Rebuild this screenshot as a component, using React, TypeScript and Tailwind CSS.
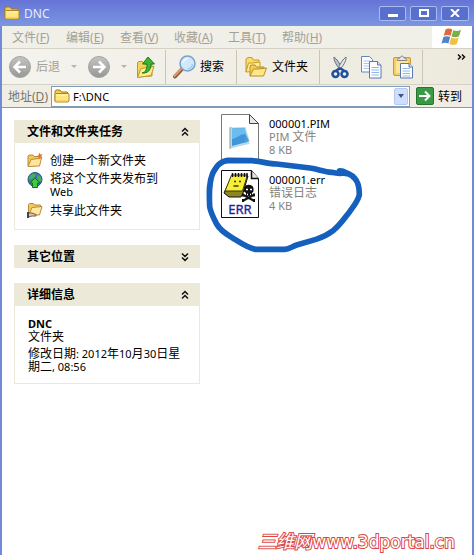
import { useState } from "react";
import type { ReactNode } from "react";

const menus = [
  { name: "文件", letter: "F" },
  { name: "编辑", letter: "E" },
  { name: "查看", letter: "V" },
  { name: "收藏", letter: "A" },
  { name: "工具", letter: "T" },
  { name: "帮助", letter: "H" },
];

const FolderIcon = ({ className }: { className: string }) => (
  <svg viewBox="0 0 16 14" className={className} aria-hidden="true">
    <path d="M1 12V2.500L2 1h4l1.500 2H13l1 1v3" fill="#f3cd55" stroke="#a87b18" />
    <path d="M1 12.500V5.500l1-1h12.500l.5.700V12l-1 1H2z" fill="#ffe680" stroke="#b3871e" />
    <path d="M2.500 6h11.500" stroke="#fff7bd" />
    <path d="M2.500 12h11" stroke="#eec44c" />
  </svg>
);

// Two stacked folders, used on the toolbar
const FoldersIcon = () => (
  <svg viewBox="0 0 24 22" className="h-[22px] w-6 shrink-0" aria-hidden="true">
    <path d="M2 16V3l1.500-1.500H8L9.500 4H15v4" fill="#f9dc6d" stroke="#c59a2c" />
    <path d="M2 16 4.500 7H8l8-1v9z" fill="#ffec98" stroke="#c59a2c" />
    <path d="M6 20V10l1-1h4l1.500 2H20v4" fill="#f3ce55" stroke="#b98c23" />
    <path d="m6 20 3.500-7H14l8.500-1-3 8z" fill="#ffe887" stroke="#b98c23" strokeLinejoin="round" />
  </svg>
);

const CircleArrow = ({ back }: { back?: boolean }) => (
  <svg viewBox="0 0 24 24" className="h-6 w-6 shrink-0" aria-hidden="true">
    <defs>
      <linearGradient id={back ? "greyBack" : "greyNext"} x1="0" y1="0" x2="0" y2="1">
        <stop offset="0" stopColor="#c4c4c2" />
        <stop offset="1" stopColor="#969694" />
      </linearGradient>
    </defs>
    <circle cx="12" cy="12" r="10.500" fill={back ? "url(#greyBack)" : "url(#greyNext)"} stroke="#a3a3a0" />
    <path
      d={back ? "M18 12H7.500M12 6.500 6.500 12l5.500 5.500" : "M6 12h10.500M12 6.500l5.500 5.500-5.500 5.500"}
      fill="none"
      stroke="#fff"
      strokeWidth="2.500"
    />
  </svg>
);

const UpFolderIcon = () => (
  <svg viewBox="0 0 20 24" className="h-6 w-5 shrink-0" aria-hidden="true">
    <path d="M1.500 22V8l1-1.500h4L8 9h8v12z" fill="#f4d35e" stroke="#c19628" />
    <path d="m1.500 22.500 3.500-9 13-2-3 9z" fill="#ffec95" stroke="#c19628" />
    <path d="M6 18c4-1 5-4 5-9H6.500L12 2l6.500 7H15c0 6-3 9.500-9 9z" fill="#3db534" stroke="#1d7d1b" strokeLinejoin="round" />
  </svg>
);

const SearchIcon = () => (
  <svg viewBox="0 0 24 24" className="h-6 w-6 shrink-0" aria-hidden="true">
    <path d="m10 14-7 7.500" stroke="#8a5a3a" strokeWidth="4" strokeLinecap="round" />
    <path d="m9.500 13.500-7 7.500" stroke="#dba078" strokeWidth="2" strokeLinecap="round" />
    <circle cx="15.500" cy="8.500" r="7.500" fill="#cfe9fb" stroke="#7d9ecb" strokeWidth="1.500" />
    <path d="M10.500 9a5 5 0 0 1 6-5.500c-3 1-5 3-6 5.500z" fill="#fff" />
    <path d="M20.500 9a5 5 0 0 1-5 5" fill="none" stroke="#9ccff3" strokeWidth="1.500" />
  </svg>
);

const ScissorsIcon = () => (
  <svg viewBox="0 0 20 24" className="h-6 w-5 shrink-0" aria-hidden="true">
    <path d="M4 2c-.5 4 3 9 6.500 13l1.500-1.500C10 9 7 4 4 2z" fill="#b9c3cd" stroke="#66717e" />
    <path d="M16 2c.5 4-3 9-6.500 13L8 13.500C10 9 13 4 16 2z" fill="#e5e9ed" stroke="#66717e" />
    <ellipse cx="5.500" cy="19" rx="3" ry="3" fill="#eef1f4" stroke="#20509d" strokeWidth="2.500" />
    <ellipse cx="14.500" cy="19" rx="3" ry="3" fill="#eef1f4" stroke="#20509d" strokeWidth="2.500" />
    <path d="m6 15.500 4-2 4 2" fill="none" stroke="#20509d" strokeWidth="2.500" />
  </svg>
);

const CopyIcon = () => (
  <svg viewBox="0 0 22 24" className="h-6 w-[22px] shrink-0" aria-hidden="true">
    <path d="M1.500 1.500h8l3 3V17h-11z" fill="#fbfdff" stroke="#6586bb" />
    <path d="M3.500 6h7M3.500 8.500h7M3.500 11h7M3.500 13.500h7" stroke="#a9c9f0" />
    <path d="M9.500 6.500h8l3.500 3.500v13H9.500z" fill="#fff" stroke="#5877b3" />
    <path d="M17.500 6.500V10H21" fill="#d4e4f8" stroke="#5877b3" />
    <path d="M11.500 12.500h7.500M11.500 15h7.500M11.500 17.500h7.500M11.500 20h7.500" stroke="#8fb7ea" />
  </svg>
);

const PasteIcon = () => (
  <svg viewBox="0 0 22 24" className="h-6 w-[22px] shrink-0" aria-hidden="true">
    <rect x="1.500" y="2.500" width="17" height="18" rx="1.500" fill="#f5cd62" stroke="#c79b3a" />
    <path d="M4 6h12v12H4z" fill="#ffe596" />
    <path d="M5.500 5.500c0-2 1-2.500 2.500-2.500.5-2.500 3.500-2.500 4 0 1.500 0 2.500.5 2.500 2.500z" fill="#e6e6ea" stroke="#80808e" />
    <path d="M8.500 8.500H17l3.500 3.500v11h-12z" fill="#fff" stroke="#5877b3" />
    <path d="M17 8.500V12h3.500" fill="#d4e4f8" stroke="#5877b3" />
    <path d="M10.500 13.500H18M10.500 16H18M10.500 18.500H18M10.500 21H18" stroke="#8fb7ea" />
  </svg>
);

const WindowsFlag = () => (
  <svg viewBox="0 0 22 20" className="h-5 w-[22px]" aria-hidden="true">
    <path d="M4.500 2.500C7 1 9 1.300 11.300 2.600L9.500 9C7.300 7.800 5 7.700 2.700 9z" fill="#e2683c" />
    <path d="M12.300 3.200c2.700 1.200 5 1 7.700-.4l-2 6.500c-2.400 1.200-4.800 1.200-7.500.1z" fill="#79b048" />
    <path d="M2.400 10.100c2.500-1.300 4.700-1.200 6.800 0l-1.800 6.500c-2-1.200-4.400-1.300-6.900.1z" fill="#4c84cc" />
    <path d="M10.200 10.600c2.700 1.100 5 1 7.500-.1l-1.900 6.600c-2.500 1.300-4.900 1.200-7.500 0z" fill="#f0c040" />
  </svg>
);

const NewFolderIcon = () => (
  <svg viewBox="0 0 16 16" className="h-4 w-4" aria-hidden="true">
    <path d="M1 14V4l1-1h4l1 1.500h6V8" fill="#efc75b" stroke="#bd8d34" />
    <path d="m1 14.500 3-7L14.500 6l-2 8z" fill="#ffe5a0" stroke="#bd8d34" />
    <path d="m12.500.5.8 2 2.200-.3-1.200 1.800 1.200 2-2.300-.5-1.200 1.800-.5-2.200-2-.9 2-1z" fill="#e8732c" />
  </svg>
);

const GlobeIcon = () => (
  <svg viewBox="0 0 16 16" className="h-4 w-4" aria-hidden="true">
    <circle cx="8" cy="7.500" r="7" fill="#3878ae" stroke="#245779" />
    <path d="M3 3.500C5 1 8 1.500 9 3L7 6 4 7.500 1.500 7zM11 3l3 2 .5 4-3 1-1.500-4z" fill="#48ab63" />
    <path d="M8 6 13 11h-2.500v4.500h-5V11H3z" fill="#3ecb40" stroke="#156f22" />
  </svg>
);

const ShareIcon = () => (
  <svg viewBox="0 0 16 16" className="h-4 w-4" aria-hidden="true">
    <path d="M1.500 12V2.500l1-1h4l1 1.500h6V7" fill="#f2cb60" stroke="#b78c34" />
    <path d="m2 12.500 3-7 10-1-2.500 8.500z" fill="#ffe9a2" stroke="#b78c34" />
    <path d="M1 11h4l4 1.500v1.500H5l-4 1z" fill="#e8c49d" stroke="#76573a" />
    <path d="M0 10h2v6H0z" fill="#3c4450" />
  </svg>
);

const GoIcon = () => (
  <svg viewBox="0 0 18 18" className="h-[18px] w-[18px]" aria-hidden="true">
    <rect x=".5" y=".5" width="17" height="17" rx="1.500" fill="#3a9a44" stroke="#22762d" />
    <path d="M3 9h10M9 4.500 13.500 9 9 13.500" fill="none" stroke="#fff" strokeWidth="2" />
  </svg>
);

const Chevrons = ({ down }: { down?: boolean }) => (
  <svg viewBox="0 0 8 10" className={down ? "h-[10px] w-2 rotate-180" : "h-[10px] w-2"} aria-hidden="true">
    <path d="m1 4.500 3-3 3 3M1 8.500l3-3 3 3" fill="none" stroke="#111" strokeWidth="1.500" />
  </svg>
);

const PimIcon = () => (
  <svg viewBox="0 0 40 48" className="h-12 w-10 shrink-0" aria-hidden="true">
    <path d="M1.500.5h28l9 9v38h-37z" fill="#fff" stroke="#777" />
    <path d="M29.500.5v9h9z" fill="#e8e8e8" stroke="#444" />
    <path d="m9.500 13.500 2-.5v21l-2 1z" fill="#8b9aa0" />
    <path d="m10.500 13.500 15-.5 4 13.500v3.500l-5 1-14 3.500z" fill="#b5dbe8" />
    <path d="m12 14.500 13-.5v14.500l-13 3.500z" fill="#3f97da" />
    <path d="m12 14.500 13-.5.5 6c-6 0-8 4-13.500 5z" fill="#6bbdf0" />
    <path d="m25 18 4 9-4 2z" fill="#4d9fd8" />
  </svg>
);

const ErrIcon = () => (
  <svg viewBox="0 0 40 48" className="h-12 w-10 shrink-0" aria-hidden="true">
    <path d="M1.500.5h30l7 8v39h-37z" fill="#fff" stroke="#111" />
    <path d="M31.500.5v8h7" fill="#e4e4e4" stroke="#111" strokeWidth="1.500" />
    <path d="M12 6h16l-5 17-2 4H9l-5-4z" fill="#8b8620" stroke="#111" />
    <path d="M11.500 5h16l-5 16H5z" fill="#f8ee38" stroke="#39370d" />
    <path d="M12.500 7V3M15.500 7V3M18.500 7V3M21.500 7V3M24.500 7V3M27 7V3" stroke="#111" strokeWidth="1.500" />
    <path d="M14 11.500h2M19 11.500h2M13.500 16h5" stroke="#39370d" strokeWidth="1.500" />
    <path d="m23.500 25 10 5.500M33.500 25l-10 5.500" stroke="#fff" strokeWidth="4" />
    <path d="m23.500 25 10 5.500M33.500 25l-10 5.500" stroke="#111" strokeWidth="2" />
    <path d="M23 23.500v3M34 23.500v3M23 29v3M34 29v3" stroke="#111" strokeWidth="2" />
    <path d="M24 18.500c0-5 9.500-5 9.500 0v3L32 23v3h-6v-3l-2-1.500z" fill="#111" />
    <path d="M26 19.500h2M30 19.500h2M27 24.500h1M30 24.500h1" stroke="#fff" strokeWidth="1.500" />
    <text x="20" y="44" textAnchor="middle" fill="#23239a" stroke="#23239a" strokeWidth=".3" className="font-['Noto_Sans',sans-serif] text-[13px]">
      ERR
    </text>
  </svg>
);

const Separator = () => <div className="h-[34px] w-px shrink-0 bg-[#c9c6b8]" />;

const DropArrow = () => (
  <span className="h-0 w-0 shrink-0 border-x-[3px] border-t-[3px] border-x-transparent border-t-[#b5b4aa]" />
);

type PanelProps = {
  title: string;
  startOpen?: boolean;
  children?: ReactNode;
};

const Panel = ({ title, startOpen = false, children }: PanelProps) => {
  const [open, setOpen] = useState(startOpen);

  return (
    <section>
      <button
        onClick={() => setOpen(!open)}
        aria-expanded={open}
        className="flex h-[23px] w-full items-center justify-between bg-[#ece9d8] pl-[13px] pr-[11px] font-bold"
      >
        {title}
        <Chevrons down={!open} />
      </button>
      {open && children && (
        <div className="border border-t-0 border-[#ece9d8] bg-white px-3">{children}</div>
      )}
    </section>
  );
};

export default function App() {
  const [address, setAddress] = useState("F:\\DNC");

  return (
    <div className="relative flex min-h-screen flex-col overflow-hidden bg-[#718ad8] px-[2px] font-['Noto_Sans','Noto_Sans_CJK_SC',sans-serif] text-[12px] leading-[13px] text-black">
      {/* Title bar */}
      <header className="-mx-[2px] flex h-[26px] items-center bg-linear-to-b from-[#6574d6] to-[#7c96e1] pl-1 pr-[5px]">
        <FolderIcon className="h-[14px] w-4" />
        <h1 className="ml-1 flex-1 text-[#e6ebff]">DNC</h1>
        <div className="flex gap-1">
          <button aria-label="Minimize" className="flex h-[15px] w-[27px] items-center justify-center rounded-[2px] border border-[#a9baf3] bg-[#5870cd]">
            <span className="mt-1 h-[3px] w-[10px] bg-white" />
          </button>
          <button aria-label="Maximize" className="flex h-[15px] w-[27px] items-center justify-center rounded-[2px] border border-[#a9baf3] bg-[#5870cd]">
            <span className="h-2 w-[10px] border-2 border-white" />
          </button>
          <button aria-label="Close" className="flex h-[15px] w-[28px] items-center justify-center rounded-[2px] border border-[#a9baf3] bg-[#5870cd]">
            <svg viewBox="0 0 10 8" className="h-2 w-[10px]" aria-hidden="true">
              <path d="m1 0 8 8M9 0 1 8" stroke="#fff" strokeWidth="2" />
            </svg>
          </button>
        </div>
      </header>

      {/* Menu bar */}
      <nav className="flex h-[23px] border-b border-[#d5d2c5] bg-[#f0efe8] text-[#a3a195]">
        <div className="flex flex-1 items-center gap-4 pl-[10px]">
          {menus.map((menu) => (
            <button key={menu.letter} className="w-[38px] shrink-0 whitespace-nowrap text-left">
              {menu.name}(<u>{menu.letter}</u>)
            </button>
          ))}
        </div>
        <div className="flex w-10 items-center justify-center bg-white">
          <WindowsFlag />
        </div>
      </nav>

      {/* Toolbar */}
      <div className="flex h-9 items-center border-b border-[#d5d2c5] bg-linear-to-r from-[#f4f3ee] to-[#edeadd]">
        <div className="flex w-[163px] shrink-0 items-center pl-[6px]">
          <button className="flex items-center gap-1 text-[#a3a195]">
            <CircleArrow back />
            后退
          </button>
          <button aria-label="后退列表" className="flex w-[27px] justify-center">
            <DropArrow />
          </button>
          <button aria-label="前进" className="flex">
            <CircleArrow />
          </button>
          <button aria-label="前进列表" className="flex w-[25px] justify-center">
            <DropArrow />
          </button>
          <button aria-label="向上" className="flex">
            <UpFolderIcon />
          </button>
        </div>
        <Separator />
        <button className="flex w-[70px] shrink-0 items-center gap-1 pl-[6px]">
          <SearchIcon />
          搜索
        </button>
        <Separator />
        <button className="flex w-[82px] shrink-0 items-center gap-1 whitespace-nowrap pl-[7px]">
          <FoldersIcon />
          文件夹
        </button>
        <Separator />
        <div className="flex w-[102px] shrink-0 items-center gap-[10px] pl-[10px]">
          <button aria-label="剪切" className="flex">
            <ScissorsIcon />
          </button>
          <button aria-label="复制" className="flex">
            <CopyIcon />
          </button>
          <button aria-label="粘贴" className="flex">
            <PasteIcon />
          </button>
        </div>
        <Separator />
        <button aria-label="更多" className="ml-auto mr-[5px] flex self-start pt-[5px]">
          <svg viewBox="0 0 10 6" className="h-[6px] w-[10px]" aria-hidden="true">
            <path d="m1 .5 2.500 2.500L1 5.500M5 .5 7.500 3 5 5.500" fill="none" stroke="#111" strokeWidth="1.500" />
          </svg>
        </button>
      </div>

      {/* Address bar */}
      <div className="flex h-[23px] items-center border-b border-[#7f9db9] bg-[#f0eee4]">
        <label htmlFor="address" className="w-[49px] shrink-0 pl-[6px] text-[#77756a]">
          地址(<u>D</u>)
        </label>
        <div className="flex h-[21px] min-w-0 flex-1 items-center border border-[#7f9db9] bg-white pl-[2px] pr-px">
          <FolderIcon className="h-[14px] w-4 shrink-0" />
          <input
            id="address"
            value={address}
            onChange={(e) => setAddress(e.target.value)}
            className="min-w-0 flex-1 pl-[3px] text-[11px] outline-none"
          />
          <button aria-label="地址列表" className="flex h-[17px] w-[14px] items-center justify-center rounded-[2px] border border-[#b4c8f4] bg-[#d0defb]">
            <span className="h-0 w-0 border-x-[3px] border-t-[4px] border-x-transparent border-t-[#3e5780]" />
          </button>
        </div>
        <button className="flex w-[62px] shrink-0 items-center gap-1 pl-[6px]">
          <GoIcon />
          转到
        </button>
      </div>

      <div className="flex flex-1 bg-white pl-3 pt-3">
        {/* Task panels */}
        <aside className="flex w-[186px] shrink-0 flex-col gap-[15px]">
          <Panel title="文件和文件夹任务" startOpen>
            <ul className="flex flex-col gap-1 pb-[11px] pt-[9px]">
              <li>
                <a href="#new" className="flex items-center gap-[7px]">
                  <NewFolderIcon />
                  创建一个新文件夹
                </a>
              </li>
              <li>
                <a href="#publish" className="flex items-start gap-[7px]">
                  <GlobeIcon />
                  <span className="flex-1">
                    将这个文件夹发布到
                    <br />
                    <span className="text-[11px]">Web</span>
                  </span>
                </a>
              </li>
              <li>
                <a href="#share" className="flex items-center gap-[7px]">
                  <ShareIcon />
                  共享此文件夹
                </a>
              </li>
            </ul>
          </Panel>
          <Panel title="其它位置" />
          <Panel title="详细信息" startOpen>
            <div className="px-px pb-[10px] pt-[11px]">
              <p className="text-[11px] font-bold">DNC</p>
              <p>文件夹</p>
              <p className="mt-1">
                修改日期<span className="text-[11px]">: 2012</span>年<span className="text-[11px]">10</span>月
                <span className="text-[11px]">30</span>日星
                <br />
                期二<span className="text-[11px]">, 08:56</span>
              </p>
            </div>
          </Panel>
        </aside>

        {/* File list */}
        <main className="relative min-w-0 flex-1 pl-5">
          <ul className="-mt-[6px] flex flex-col gap-2">
            <li className="flex gap-[9px]">
              <PimIcon />
              <div className="pt-[3px] text-[11px] text-[#85847d]">
                <p className="text-black">000001.PIM</p>
                <p>
                  PIM <span className="text-[12px]">文件</span>
                </p>
                <p>8 KB</p>
              </div>
            </li>
            <li className="flex gap-[9px]">
              <ErrIcon />
              <div className="pt-[3px] text-[11px] text-[#85847d]">
                <p className="text-black">000001.err</p>
                <p className="text-[12px]">错误日志</p>
                <p>4 KB</p>
              </div>
            </li>
          </ul>
          {/* Pen mark around the log file */}
          <svg viewBox="0 0 510 450" className="pointer-events-none absolute -top-[10px] left-0 h-[150px] w-[170px]" aria-hidden="true">
            <path
              d="M420 185c18 2 32 6 44 20 12 12 14 31 14 50-6 22-18 34-29 50-16 20-29 41-50 57-16 12-32 20-51 26l-58 17c-13 4-22 12-36 13l-88 0c-24-4-48-22-71-36-17-10-35-22-45-40-9-17-18-33-21-52-1-34-4-70 9-100 12-22 22-37 47-39l71 1c26 2 50 9 74 10l100 12c26 4 42 11 65 13 12 3 26 4 40 2"
              fill="none"
              stroke="#1560bd"
              strokeWidth="17"
              strokeLinecap="round"
              strokeLinejoin="round"
            />
            <path d="M420 184c7 0 12 2 17 5" stroke="#1560bd" strokeWidth="20" strokeLinecap="round" />
          </svg>
        </main>
      </div>

      <a
        href="#portal"
        className="absolute bottom-1 right-[19px] flex items-center whitespace-nowrap font-['DejaVu_Sans','Noto_Sans_CJK_SC',sans-serif] text-[17px] leading-[18px] text-white [-webkit-text-stroke:2px_#dc4848] [paint-order:stroke_fill]"
      >
        <span className="text-[18px] italic">三维网</span>www.3dportal.cn
      </a>
    </div>
  );
}
